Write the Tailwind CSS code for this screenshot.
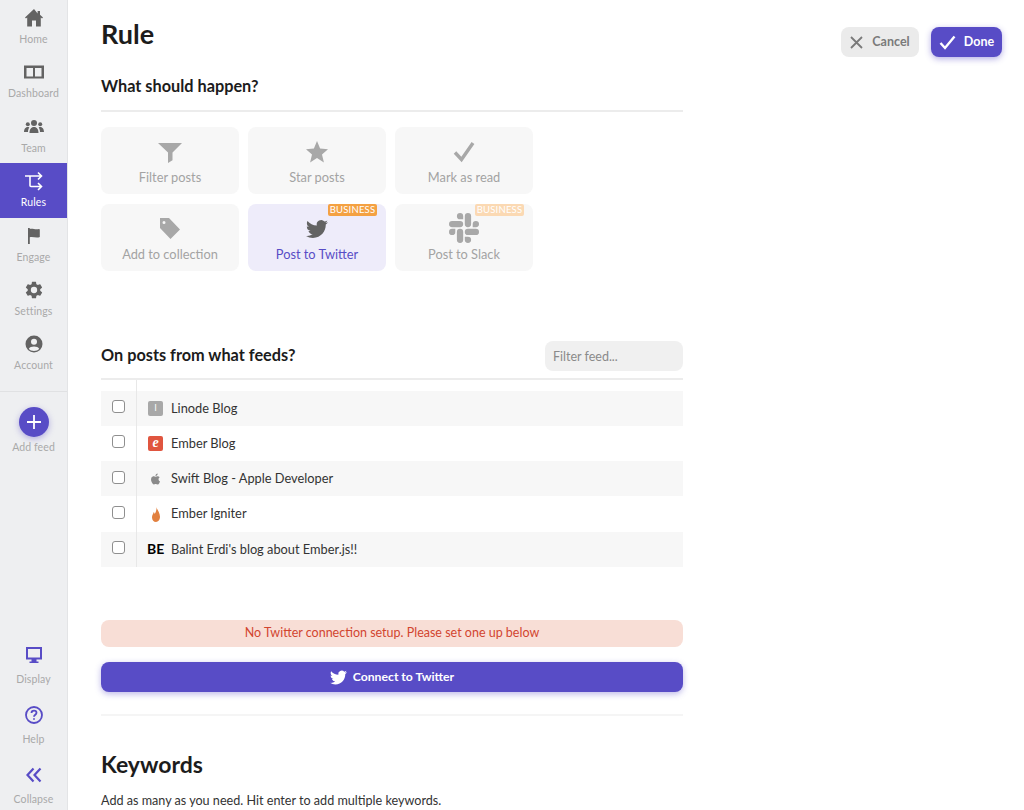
<!DOCTYPE html>
<html lang="en">
<head>
<meta charset="UTF-8">
<title>Rule</title>
<script src="https://cdn.jsdelivr.net/npm/@tailwindcss/browser@4"></script>
</head>
<body class="h-screen overflow-hidden bg-white flex font-['Lato',sans-serif]">

<!-- sidebar -->
<nav class="w-[68px] shrink-0 h-full bg-[#eeeff1] border-r border-[#e3e4e6] flex flex-col text-[10.5px] leading-[14px] tracking-[0.1px] text-[#a9a9a9]">
  <a class="h-[54.4px] flex flex-col items-center pt-[8px]">
    <svg class="w-[20px] h-[20px] text-[#636363]" viewBox="0 0 20 20" fill="currentColor"><path d="M10 1 1 9.6l1 1L3.2 9.5V18.500h4.800v-6h4v6h4.800V9.500l1.200 1.100 1-1-3-2.800V3h-2.400v2.600z"/></svg>
    <span class="mt-[4px]">Home</span>
  </a>
  <a class="h-[54.4px] flex flex-col items-center pt-[8px]">
    <svg class="w-[20px] h-[20px] text-[#636363]" viewBox="0 0 20 20" fill="currentColor"><path fill-rule="evenodd" d="M0 3.500h20v13H0zM2.500 6v8.500h6.500V6zM11 6v8.500h6.500V6z"/></svg>
    <span class="mt-[4px]">Dashboard</span>
  </a>
  <a class="h-[54.4px] flex flex-col items-center pt-[8px]">
    <svg class="w-[20px] h-[20px] text-[#636363]" viewBox="0 0 20 20" fill="currentColor"><circle cx="10" cy="6" r="3"/><circle cx="3.800" cy="7.300" r="2"/><circle cx="16.200" cy="7.300" r="2"/><path d="M5.500 16c0-3.500 1.500-6 4.500-6s4.500 2.500 4.500 6zM0 15c0-2.500 1.200-5 3.800-5 .6 0 1.100.1 1.500.4C4.400 11.700 4 13.300 4 15zM20 15c0-2.500-1.200-5-3.800-5-.6 0-1.100.1-1.500.4.900 1.300 1.300 2.900 1.300 4.600z"/></svg>
    <span class="mt-[4px]">Team</span>
  </a>
  <a class="h-[54.4px] flex flex-col items-center pt-[8px] bg-[#584cc6] text-white">
    <svg class="w-[20px] h-[20px]" viewBox="0 0 20 20" fill="none" stroke="currentColor" stroke-width="1.600"><path d="M1 5h16M14 1.500 17.500 5 14 8.500M6 5v9.500c0 .6.400 1 1 1h10.500M14 12l3.500 3.500L14 19"/></svg>
    <span class="mt-[4px]">Rules</span>
  </a>
  <a class="h-[54.4px] flex flex-col items-center pt-[8px]">
    <svg class="w-[20px] h-[20px] text-[#636363]" viewBox="0 0 20 20" fill="currentColor"><path d="M4 2h1.800v1c2.800-1 5.200 1 9.200 0 .5 0 .8.200.8.700V11c-3.800 1.500-7-.9-10 .2V18H4z"/></svg>
    <span class="mt-[4px]">Engage</span>
  </a>
  <a class="h-[54.4px] flex flex-col items-center pt-[8px]">
    <svg class="w-[20px] h-[20px] text-[#636363]" viewBox="0 0 24 24" fill="currentColor"><path fill-rule="evenodd" d="M19.400 13c.04-.33.100-.66.100-1s-.06-.67-.1-1l2.100-1.600c.2-.15.250-.43.120-.65l-2-3.460c-.13-.22-.4-.3-.62-.22l-2.500 1c-.52-.4-1.080-.73-1.700-.98l-.37-2.650A.5.500 0 0 0 14 2h-4a.5.500 0 0 0-.5.420l-.37 2.650c-.62.250-1.180.59-1.700.98l-2.500-1c-.22-.08-.49 0-.62.220l-2 3.460c-.13.220-.07.500.12.650L4.500 11c-.04.330-.1.660-.1 1s.06.670.1 1l-2.100 1.600c-.2.150-.25.430-.12.650l2 3.460c.13.220.4.300.62.220l2.500-1c.52.400 1.080.730 1.700.980l.37 2.650c.04.240.25.420.5.420h4c.25 0 .46-.18.500-.42l.37-2.650c.62-.25 1.180-.59 1.700-.98l2.500 1c.22.080.49 0 .62-.22l2-3.460c.13-.22.07-.5-.12-.65zM12 15.800a3.800 3.800 0 1 1 0-7.600 3.800 3.800 0 0 1 0 7.600z"/></svg>
    <span class="mt-[4px]">Settings</span>
  </a>
  <a class="h-[54.4px] flex flex-col items-center pt-[8px]">
    <svg class="w-[20px] h-[20px] text-[#636363]" viewBox="0 0 20 20" fill="currentColor"><path fill-rule="evenodd" d="M10 1.500a8.500 8.500 0 1 1 0 17 8.500 8.500 0 0 1 0-17zM10 4.800a3 3 0 1 0 0 6 3 3 0 0 0 0-6zM4.800 14.800c1 1.500 3 2.200 5.200 2.200s4.200-.7 5.200-2.200c-.8-1.500-2.800-2.300-5.200-2.300s-4.400.8-5.200 2.300z"/></svg>
    <span class="mt-[4px]">Account</span>
  </a>
  <div class="mt-[10px] border-t border-[#e0e1e3] flex flex-col items-center pt-[15px]">
    <div class="w-[30px] h-[30px] rounded-full bg-[#584cc6] shadow-[0_2px_6px_rgba(88,76,198,0.4)] flex items-center justify-center">
      <svg class="w-[16px] h-[16px] text-white" viewBox="0 0 16 16" fill="none" stroke="currentColor" stroke-width="1.800"><path d="M8 1v14M1 8h14"/></svg>
    </div>
    <span class="mt-[3px]">Add feed</span>
  </div>
  <div class="mt-auto flex flex-col">
    <a class="h-[60px] flex flex-col items-center">
      <svg class="w-[20px] h-[20px] text-[#584cc6]" viewBox="0 0 20 20" fill="currentColor"><path fill-rule="evenodd" d="M2 2h16v12.500h-5.500V16.500h2V18h-9v-1.500h2v-2H2zM4 4v8.500h12V4z"/></svg>
      <span class="mt-[7px]">Display</span>
    </a>
    <a class="h-[60px] flex flex-col items-center">
      <svg class="w-[20px] h-[20px] text-[#584cc6]" viewBox="0 0 20 20" fill="none" stroke="currentColor" stroke-width="1.800"><circle cx="10" cy="10" r="8"/><path d="M7.500 8c0-1.500 1.100-2.400 2.500-2.400s2.500.9 2.500 2.200c0 2-2.500 2-2.500 4"/><path d="M10 13.300v1.500"/></svg>
      <span class="mt-[7px]">Help</span>
    </a>
    <a class="h-[45px] flex flex-col items-center">
      <svg class="w-[20px] h-[20px] text-[#584cc6]" viewBox="0 0 20 20" fill="none" stroke="currentColor" stroke-width="2.200"><path d="M9.500 3.500 3.500 10l6 6.500M16.500 3.500 10.500 10l6 6.500"/></svg>
      <span class="mt-[7px]">Collapse</span>
    </a>
  </div>
</nav>

<!-- content -->
<main class="flex-1 relative overflow-hidden pl-[33px]">
  <div class="absolute top-[27px] right-[22px] flex gap-[12px] text-[12.500px] font-bold">
    <button class="h-[30px] w-[78px] rounded-[8px] bg-[#ebebeb] text-[#7a7a7a] flex items-center justify-center gap-[9px]">
      <svg class="w-[13px] h-[13px]" viewBox="0 0 13 13" fill="none" stroke="currentColor" stroke-width="1.800"><path d="M1 1l11 11M12 1 1 12"/></svg>
      Cancel
    </button>
    <button class="h-[30px] w-[71px] rounded-[8px] bg-[#584cc6] text-white shadow-[0_2px_6px_rgba(88,76,198,0.45)] flex items-center justify-center gap-[8px]">
      <svg class="w-[17px] h-[15px]" viewBox="0 0 17 15" fill="none" stroke="currentColor" stroke-width="2.400"><path d="M1.500 8l4.500 5L15.500 1.500"/></svg>
      Done
    </button>
  </div>

  <div class="w-[582px]">
    <h1 class="text-[27px] leading-[34px] font-bold text-[#1c1c1c] pt-[17px]">Rule</h1>
    <h2 class="mt-[23px] text-[16.300px] leading-[24px] font-bold text-[#1c1c1c]">What should happen?</h2>
    <div class="mt-[12px] border-t-2 border-[#ececec]"></div>

    <div class="mt-[15px] grid grid-cols-[138px_138px_138px] gap-x-[9px] gap-y-[10px] text-[12.800px] leading-[16px] text-[#a3a3a3]">
      <div class="h-[67px] rounded-[8px] bg-[#f7f7f7] flex flex-col items-center pt-[16px]">
        <svg class="w-[24px] h-[20px] text-[#a8a8a8]" viewBox="0 0 24 22" fill="currentColor" preserveAspectRatio="none"><path d="M0 0h24l-9.500 10.500V19L10 22V10.500z"/></svg>
        <span class="mt-[6px]">Filter posts</span>
      </div>
      <div class="h-[67px] rounded-[8px] bg-[#f7f7f7] flex flex-col items-center pt-[14px]">
        <svg class="w-[22px] h-[22px] text-[#a8a8a8]" viewBox="0 0 22 22" fill="currentColor"><path d="M11 0l3.100 7.600 7.900.6-6 5.200 1.900 8L11 17.100 4.100 21.400l1.900-8-6-5.200 7.900-.6z"/></svg>
        <span class="mt-[6px]">Star posts</span>
      </div>
      <div class="h-[67px] rounded-[8px] bg-[#f7f7f7] flex flex-col items-center pt-[14px]">
        <svg class="w-[22px] h-[22px] text-[#a8a8a8]" viewBox="0 0 22 22" fill="none" stroke="currentColor" stroke-width="3.400"><path d="M2 11.500l6.500 7L20 2"/></svg>
        <span class="mt-[6px]">Mark as read</span>
      </div>
      <div class="h-[67px] rounded-[8px] bg-[#f7f7f7] flex flex-col items-center pt-[14px]">
        <svg class="w-[22px] h-[22px] text-[#a8a8a8]" viewBox="0 0 22 22" fill="currentColor"><path fill-rule="evenodd" d="M1 0h9l11 11.500L11.500 21 1 10zM5 3a1.500 1.500 0 1 0 0 3 1.500 1.500 0 0 0 0-3z"/></svg>
        <span class="mt-[6px]">Add to collection</span>
      </div>
      <div class="relative h-[67px] rounded-[8px] bg-[#eeecfa] flex flex-col items-center pt-[14px] text-[#584cc6]">
        <span class="absolute top-0 right-[9px] h-[12px] w-[49px] text-center rounded-[2px] bg-[#f4a142] text-white text-[9.500px] leading-[12px] tracking-[0.2px]">BUSINESS</span>
        <svg class="w-[22px] h-[22px] text-[#636363]" viewBox="0 0 24 24" fill="currentColor"><path d="M23.953 4.570a10 10 0 01-2.825.775 4.958 4.958 0 002.163-2.723c-.951.555-2.005.959-3.127 1.184a4.920 4.920 0 00-8.384 4.482C7.690 8.095 4.067 6.130 1.640 3.162a4.822 4.822 0 00-.666 2.475c0 1.710.870 3.213 2.188 4.096a4.904 4.904 0 01-2.228-.616v.060a4.923 4.923 0 003.946 4.827 4.996 4.996 0 01-2.212.085 4.936 4.936 0 004.604 3.417 9.867 9.867 0 01-6.102 2.105c-.390 0-.779-.023-1.170-.067a13.995 13.995 0 007.557 2.209c9.053 0 13.998-7.496 13.998-13.985 0-.210 0-.420-.015-.630A9.935 9.935 0 0024 4.590z"/></svg>
        <span class="mt-[6px]">Post to Twitter</span>
      </div>
      <div class="relative h-[67px] rounded-[8px] bg-[#f7f7f7] flex flex-col items-center pt-[9px]">
        <span class="absolute top-0 right-[9px] h-[12px] w-[49px] text-center rounded-[2px] bg-[#fbd9b3] text-white text-[9.500px] leading-[12px] tracking-[0.2px]">BUSINESS</span>
        <svg class="w-[30px] h-[30px] text-[#a8a8a8]" viewBox="0 0 24 24" fill="currentColor"><path d="M5.042 15.165a2.528 2.528 0 0 1-2.520 2.523A2.528 2.528 0 0 1 0 15.165a2.527 2.527 0 0 1 2.522-2.520h2.520v2.520zM6.313 15.165a2.527 2.527 0 0 1 2.521-2.520 2.527 2.527 0 0 1 2.521 2.520v6.313A2.528 2.528 0 0 1 8.834 24a2.528 2.528 0 0 1-2.521-2.522v-6.313zM8.834 5.042a2.528 2.528 0 0 1-2.521-2.520A2.528 2.528 0 0 1 8.834 0a2.528 2.528 0 0 1 2.521 2.522v2.520H8.834zM8.834 6.313a2.528 2.528 0 0 1 2.521 2.521 2.528 2.528 0 0 1-2.521 2.521H2.522A2.528 2.528 0 0 1 0 8.834a2.528 2.528 0 0 1 2.522-2.521h6.312zM18.956 8.834a2.528 2.528 0 0 1 2.522-2.521A2.528 2.528 0 0 1 24 8.834a2.528 2.528 0 0 1-2.522 2.521h-2.522V8.834zM17.688 8.834a2.528 2.528 0 0 1-2.523 2.521 2.527 2.527 0 0 1-2.520-2.521V2.522A2.527 2.527 0 0 1 15.165 0a2.528 2.528 0 0 1 2.523 2.522v6.312zM15.165 18.956a2.528 2.528 0 0 1 2.523 2.522A2.528 2.528 0 0 1 15.165 24a2.527 2.527 0 0 1-2.520-2.522v-2.522h2.520zM15.165 17.688a2.527 2.527 0 0 1-2.520-2.523 2.526 2.526 0 0 1 2.520-2.520h6.313A2.527 2.527 0 0 1 24 15.165a2.528 2.528 0 0 1-2.522 2.523h-6.313z"/></svg>
        <span class="mt-[3px]">Post to Slack</span>
      </div>
    </div>

    <div class="mt-[70px] h-[30px] flex items-center justify-between">
      <h2 class="text-[16.300px] leading-[24px] font-bold text-[#1c1c1c] -mt-[3px]">On posts from what feeds?</h2>
      <input class="w-[138px] h-[30px] rounded-[8px] bg-[#f0f0f0] px-[8px] text-[12.500px] placeholder:text-[#8a8a8a]" placeholder="Filter feed...">
    </div>
    <div class="mt-[7px] border-t-2 border-[#ececec]"></div>

    <!-- feed list, scrolled -->
    <div class="relative h-[187px] flex flex-col justify-end overflow-hidden text-[12.800px] text-[#333]">
      <div class="absolute left-[35px] top-0 bottom-0 border-l border-[#e8e8e8]"></div>
      <div class="flex items-center h-[35.300px] shrink-0">
        <div class="ml-[47px] w-[15px] h-[15px] rounded-[2px] bg-[#a8a8a8]"></div>
      </div>
      <div class="flex items-center h-[35.300px] shrink-0 bg-[#f7f7f7]">
        <div class="w-[35px] flex justify-center -mt-[3px]"><input type="checkbox" class="appearance-none w-[13px] h-[13px] rounded-[3px] bg-white border border-[#8f8f8f]"></div>
        <div class="ml-[12px] w-[15px] h-[15px] rounded-[2px] bg-[#a8a8a8] flex items-center justify-center text-white text-[9px]">l</div>
        <span class="ml-[8px]">Linode Blog</span>
      </div>
      <div class="flex items-center h-[35.300px] shrink-0">
        <div class="w-[35px] flex justify-center -mt-[3px]"><input type="checkbox" class="appearance-none w-[13px] h-[13px] rounded-[3px] bg-white border border-[#8f8f8f]"></div>
        <div class="ml-[12px] w-[15px] h-[15px] rounded-[2px] bg-[#e0553f] flex items-center justify-center text-white text-[14px] leading-none font-bold italic font-['Liberation_Serif',serif]">e</div>
        <span class="ml-[8px]">Ember Blog</span>
      </div>
      <div class="flex items-center h-[35.300px] shrink-0 bg-[#f7f7f7]">
        <div class="w-[35px] flex justify-center -mt-[3px]"><input type="checkbox" class="appearance-none w-[13px] h-[13px] rounded-[3px] bg-white border border-[#8f8f8f]"></div>
        <div class="ml-[12px] w-[15px] h-[15px] flex items-center justify-center">
          <svg class="w-[11px] h-[12px] text-[#8a8a8a]" viewBox="0 0 24 24" fill="currentColor"><path d="M12.152 6.896c-.948 0-2.415-1.078-3.960-1.040-2.040.027-3.910 1.183-4.961 3.014-2.117 3.675-.546 9.103 1.519 12.090 1.013 1.454 2.208 3.090 3.792 3.039 1.520-.065 2.090-.987 3.935-.987 1.831 0 2.350.987 3.960.948 1.637-.026 2.676-1.480 3.676-2.948 1.156-1.688 1.636-3.325 1.662-3.415-.039-.013-3.182-1.221-3.220-4.857-.026-3.040 2.480-4.494 2.597-4.559-1.429-2.090-3.623-2.324-4.390-2.376-2-.156-3.675 1.090-4.610 1.090zM15.530 3.830c.843-1.012 1.400-2.427 1.245-3.830-1.207.052-2.662.805-3.532 1.818-.780.896-1.454 2.338-1.273 3.714 1.338.104 2.715-.688 3.559-1.701"/></svg>
        </div>
        <span class="ml-[8px]">Swift Blog - Apple Developer</span>
      </div>
      <div class="flex items-center h-[35.300px] shrink-0">
        <div class="w-[35px] flex justify-center -mt-[3px]"><input type="checkbox" class="appearance-none w-[13px] h-[13px] rounded-[3px] bg-white border border-[#8f8f8f]"></div>
        <div class="ml-[12px] w-[15px] h-[15px] flex items-center justify-center">
          <svg class="w-[8px] h-[15px] text-[#e2803f]" viewBox="0 0 9 15" fill="currentColor" preserveAspectRatio="none"><path d="M5 0c.4 2.500 4 5.500 4 9.800C9 12.900 7 15 4.500 15S0 12.900 0 10.200C0 7.800 1.500 7 2 5c.6.500 1 1.200 1 2C4.400 5.500 5.300 2.800 5 0z"/></svg>
        </div>
        <span class="ml-[8px]">Ember Igniter</span>
      </div>
      <div class="flex items-center h-[35.300px] shrink-0 bg-[#f7f7f7]">
        <div class="w-[35px] flex justify-center -mt-[3px]"><input type="checkbox" class="appearance-none w-[13px] h-[13px] rounded-[3px] bg-white border border-[#8f8f8f]"></div>
        <div class="ml-[11px] w-[17px] text-[14px] font-bold text-black leading-none">BE</div>
        <span class="ml-[7px]">Balint Erdi's blog about Ember.js!!</span>
      </div>
    </div>

    <div class="mt-[53px] h-[27px] rounded-[8px] bg-[#f8ded6] flex items-center justify-center text-[12.500px] text-[#d2452f]">No Twitter connection setup. Please set one up below</div>
    <button class="mt-[15px] w-full h-[30px] rounded-[8px] bg-[#584cc6] shadow-[0_2px_6px_rgba(88,76,198,0.4)] text-white text-[12.200px] font-bold flex items-center justify-center gap-[6px]">
      <svg class="w-[17px] h-[17px]" viewBox="0 0 24 24" fill="currentColor"><path d="M23.953 4.570a10 10 0 01-2.825.775 4.958 4.958 0 002.163-2.723c-.951.555-2.005.959-3.127 1.184a4.920 4.920 0 00-8.384 4.482C7.690 8.095 4.067 6.130 1.640 3.162a4.822 4.822 0 00-.666 2.475c0 1.710.870 3.213 2.188 4.096a4.904 4.904 0 01-2.228-.616v.060a4.923 4.923 0 003.946 4.827 4.996 4.996 0 01-2.212.085 4.936 4.936 0 004.604 3.417 9.867 9.867 0 01-6.102 2.105c-.390 0-.779-.023-1.170-.067a13.995 13.995 0 007.557 2.209c9.053 0 13.998-7.496 13.998-13.985 0-.210 0-.420-.015-.630A9.935 9.935 0 0024 4.590z"/></svg>
      Connect to Twitter
    </button>
    <div class="mt-[22px] border-t-2 border-[#f5f5f5]"></div>
    <h2 class="mt-[32px] text-[23px] leading-[32px] font-bold text-[#1c1c1c]">Keywords</h2>
    <p class="mt-[12px] text-[12.600px] leading-[18px] text-[#333]">Add as many as you need. Hit enter to add multiple keywords.</p>
  </div>
</main>
</body>
</html>
